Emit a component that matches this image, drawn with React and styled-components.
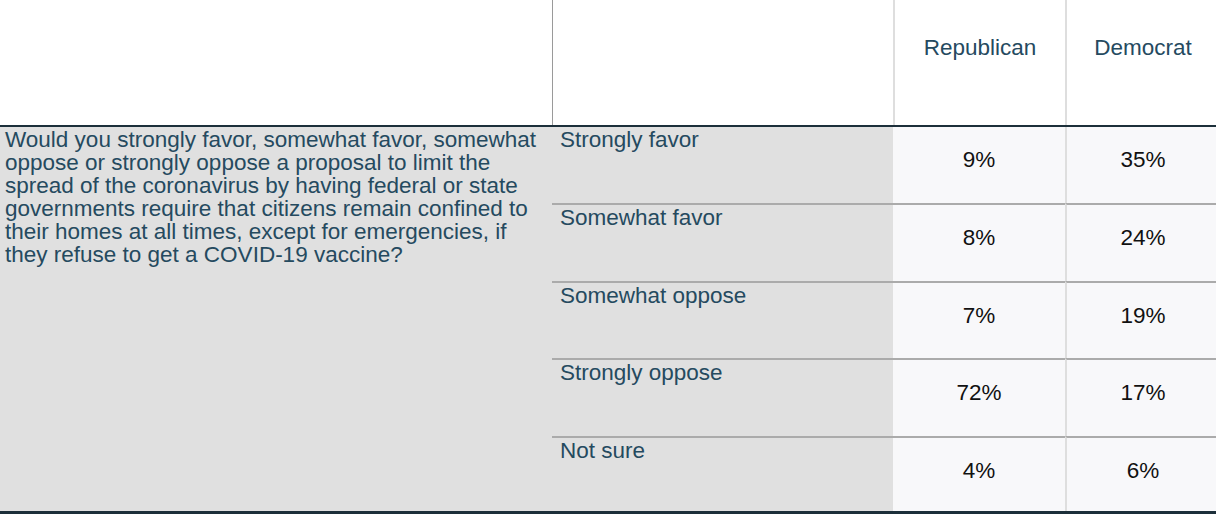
import React from 'react';
import styled, {createGlobalStyle} from 'styled-components';

const GlobalStyle = createGlobalStyle`
  html, body {
    margin: 0;
    padding: 0;
    background: #ffffff;
    overflow: hidden;
  }
  body {
    font-family: "Liberation Sans", Helvetica, Arial, sans-serif;
  }
  * {
    box-sizing: border-box;
  }
`;

const columns = '552px 341px 172px 154px';

const Table = styled.div`
  width: 1219px;
  display: flex;
  flex-direction: column;
  font-size: 22.5px;
  line-height: 23px;
`;

const HeaderRow = styled.div`
  display: grid;
  grid-template-columns: ${columns};
  height: 125px;
  background: #ffffff;
`;

const HeadCell = styled.div`
  border-left: ${props => props.edge || 'none'};
  padding-top: 36px;
  text-align: center;
  color: #254a5f;
`;

const Body = styled.div`
  display: grid;
  grid-template-columns: ${columns};
  grid-template-rows: 76px 78px 77px 78px 75px;
  border-top: 2px solid #1c2f3a;
  border-bottom: 3px solid #1c2f3a;
`;

const Question = styled.div`
  grid-column: 1;
  grid-row: 1 / span 5;
  background: #e0e0e0;
  color: #254a5f;
  padding: 1px 12px 0 5px;
`;

const Label = styled.div`
  grid-column: 2;
  background: #e0e0e0;
  color: #254a5f;
  padding: 1px 0 0 8px;
  border-top: ${props => (props.first ? 'none' : '2px solid #ababab')};
`;

const Value = styled.div`
  grid-column: ${props => props.col};
  background: #f8f8fa;
  color: #111111;
  text-align: center;
  padding-top: 21px;
  border-top: ${props => (props.first ? 'none' : '2px solid #ababab')};
  border-left: ${props => (props.col === 4 ? '2px solid #dedede' : 'none')};
`;

const question =
  'Would you strongly favor, somewhat favor, somewhat oppose or strongly oppose a proposal to limit the spread of the coronavirus by having federal or state governments require that citizens remain confined to their homes at all times, except for emergencies, if they refuse to get a COVID-19 vaccine?';

const answers = [
  {label: 'Strongly favor', rep: '9%', dem: '35%'},
  {label: 'Somewhat favor', rep: '8%', dem: '24%'},
  {label: 'Somewhat oppose', rep: '7%', dem: '19%'},
  {label: 'Strongly oppose', rep: '72%', dem: '17%'},
  {label: 'Not sure', rep: '4%', dem: '6%'}
];

export default function App() {
  return (
    <>
      <GlobalStyle />
      <Table>
        <HeaderRow>
          <HeadCell />
          <HeadCell edge="1px solid #9a9a9a" />
          <HeadCell edge="2px solid #dedede">Republican</HeadCell>
          <HeadCell edge="2px solid #dedede">Democrat</HeadCell>
        </HeaderRow>
        <Body>
          <Question>{question}</Question>
          {answers.map((item, index) => (
            <React.Fragment key={item.label}>
              <Label first={index === 0} style={{gridRow: index + 1}}>
                {item.label}
              </Label>
              <Value first={index === 0} col={3} style={{gridRow: index + 1}}>
                {item.rep}
              </Value>
              <Value first={index === 0} col={4} style={{gridRow: index + 1}}>
                {item.dem}
              </Value>
            </React.Fragment>
          ))}
        </Body>
      </Table>
    </>
  );
}
